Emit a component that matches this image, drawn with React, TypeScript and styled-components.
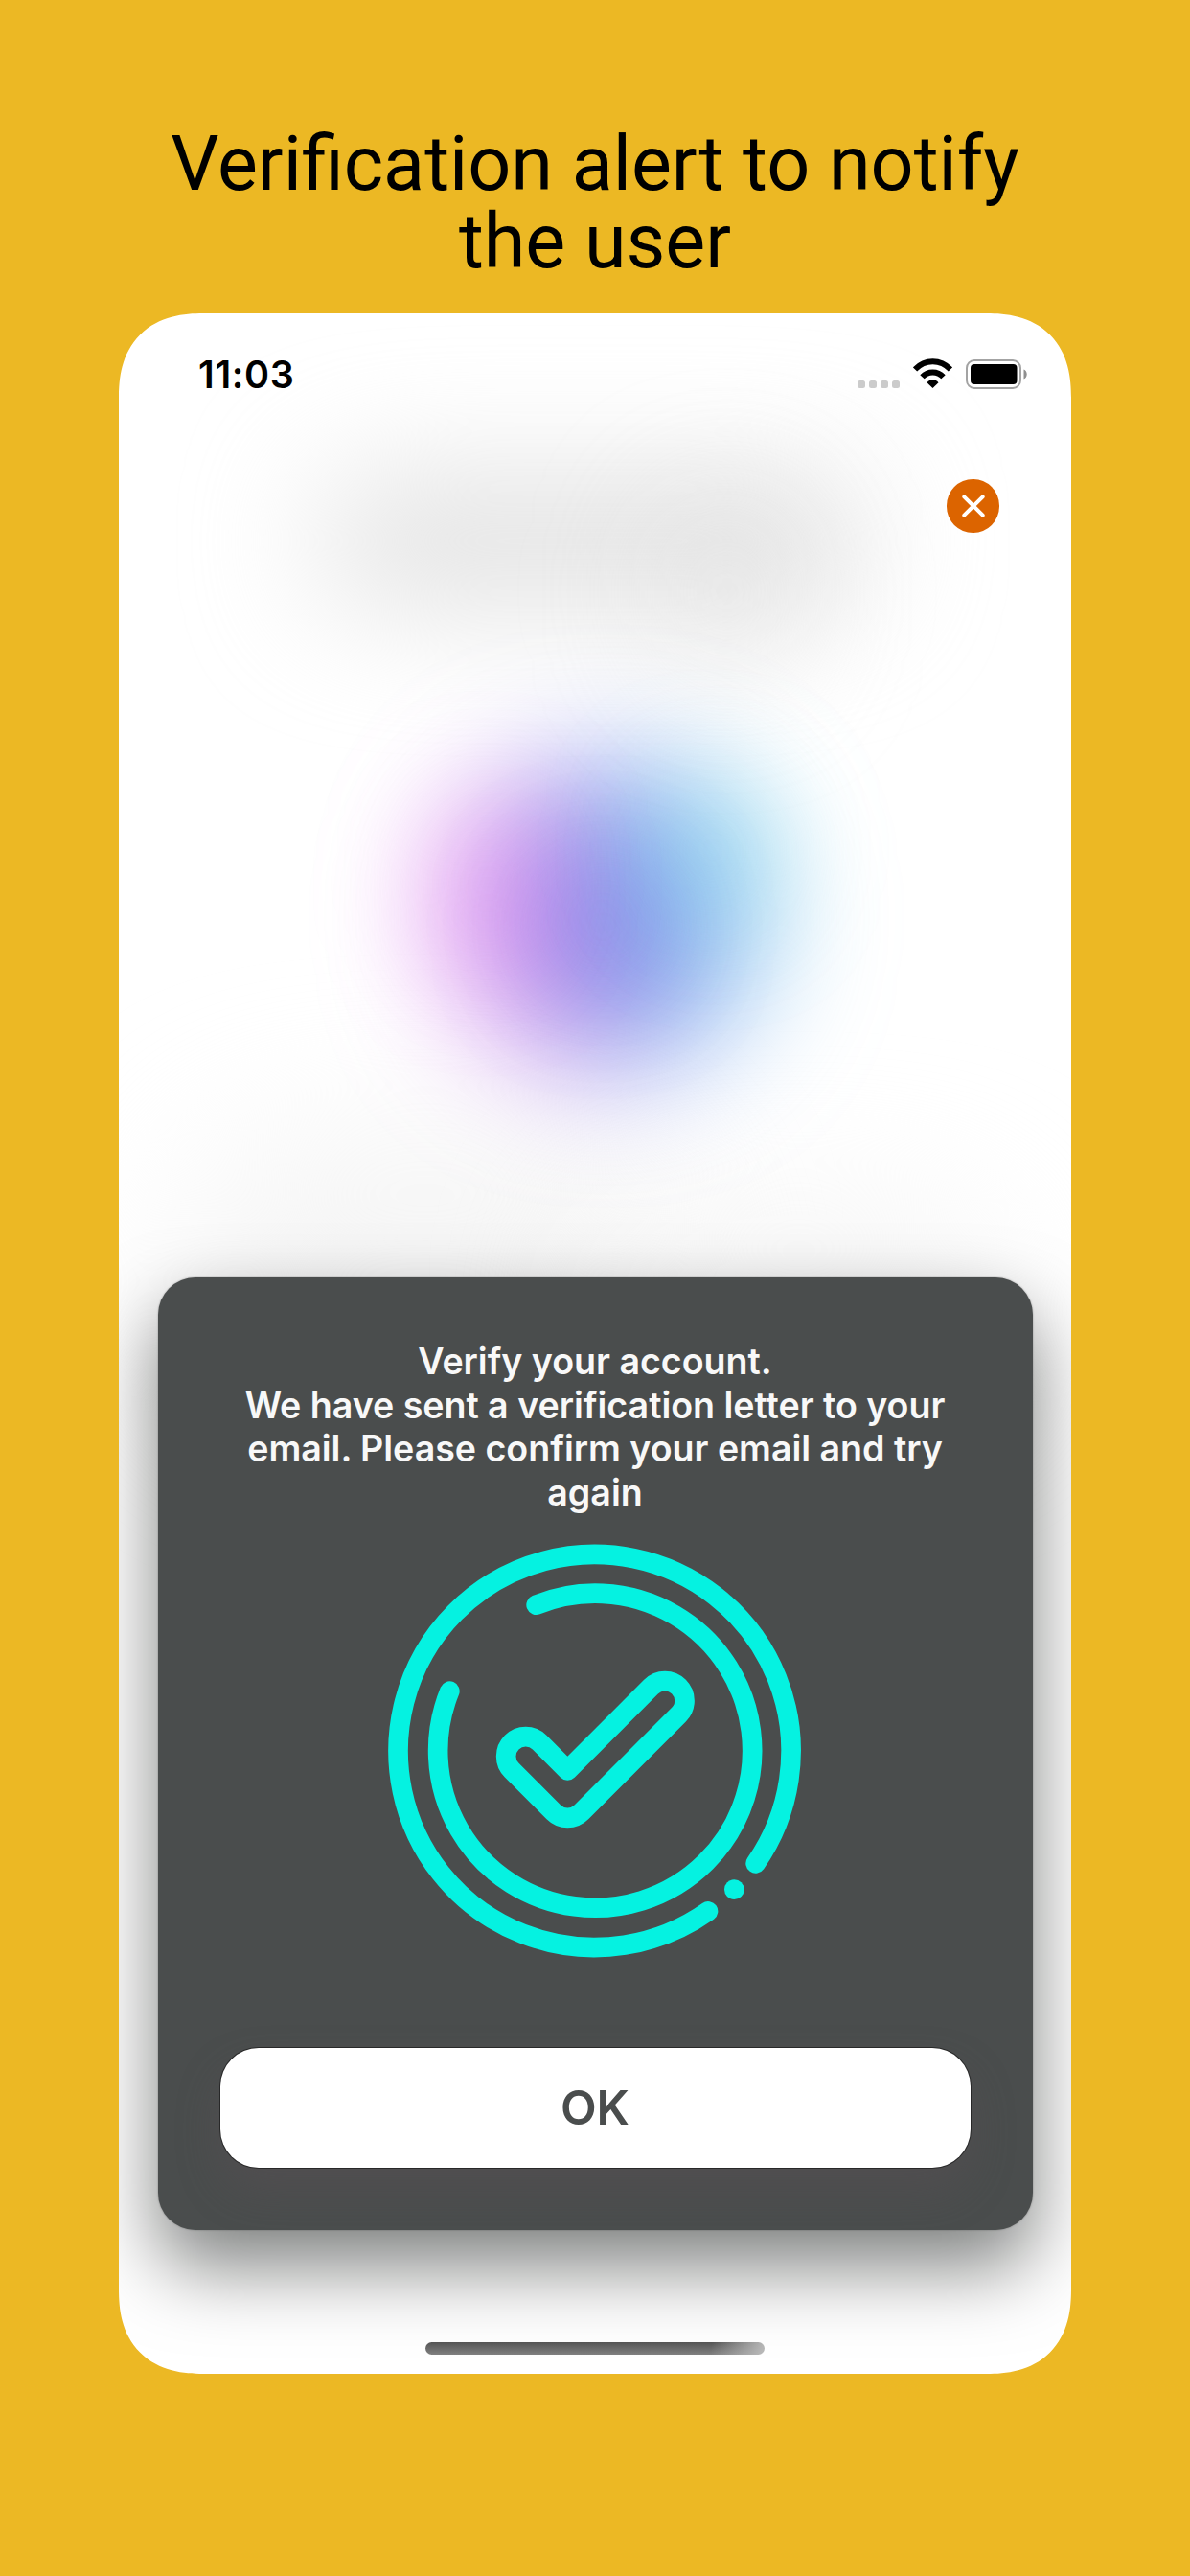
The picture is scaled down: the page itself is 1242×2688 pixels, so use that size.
import React from "react";
import styled, { createGlobalStyle } from "styled-components";

const GlobalStyle = createGlobalStyle`
  *, *::before, *::after { box-sizing: border-box; }
  body { margin: 0; background: #ecb824; }
`;

const Page = styled.main`
  display: flex;
  flex-direction: column;
  align-items: center;
  width: 1242px;
  height: 2688px;
  padding-top: 131px;
  overflow: hidden;
  background: #ecb824;
`;

const Title = styled.h1`
  width: 920px;
  height: 196px;
  margin: 0;
  color: #000;
  font: 400 79.1px/81px Roboto, sans-serif;
  text-align: center;
`;

const Screen = styled.section`
  position: relative;
  isolation: isolate;
  display: flex;
  flex-direction: column;
  width: 993.6px;
  height: 2150px;
  overflow: hidden;
  border-radius: 88px;
  corner-shape: superellipse(1.25);
  background: #fff;
  font-family: Inter, sans-serif;
`;

const Backdrop = styled.div`
  position: absolute;
  inset: 0;
  z-index: -1;
`;

const Blob = styled.div<{ $x: number; $y: number; $w: number; $h: number; $fill: string; $blur: number }>`
  position: absolute;
  left: ${(p) => p.$x}px;
  top: ${(p) => p.$y}px;
  width: ${(p) => p.$w}px;
  height: ${(p) => p.$h}px;
  border-radius: ${(p) => Math.min(p.$w, p.$h) / 2}px;
  background: ${(p) => p.$fill};
  filter: blur(${(p) => p.$blur}px);
`;

const StatusBar = styled.header`
  display: flex;
  justify-content: space-between;
  align-items: flex-end;
  height: 78px;
  padding: 0 46.3px 0 82.8px;
`;

const Time = styled.time`
  margin-bottom: -10px;
  color: #000;
  font-size: 39.5px;
  font-weight: 600;
  line-height: 48px;
  letter-spacing: 0.7px;
`;

const Indicators = styled.div`
  display: flex;
  align-items: flex-end;
`;

const Dots = styled.div`
  display: flex;
  gap: 4px;
  margin-right: 14px;
`;

const Dot = styled.i`
  width: 8px;
  height: 8px;
  border-radius: 2.5px;
  background: #cbcbcb;
`;

const Wifi = styled.svg`
  display: block;
  width: 41px;
  height: 31px;
  margin-right: 14px;
`;

const Battery = styled.svg`
  display: block;
  width: 64px;
  height: 31px;
  margin-bottom: -0.5px;
`;

const Toolbar = styled.div`
  display: flex;
  justify-content: flex-end;
  padding: 95px 74.5px 0 0;
`;

const CloseButton = styled.button`
  display: flex;
  align-items: center;
  justify-content: center;
  width: 55.5px;
  height: 55.5px;
  padding: 0;
  border: 0;
  border-radius: 50%;
  background: #dc6400;
`;

const Dialog = styled.section`
  display: flex;
  flex-direction: column;
  align-items: center;
  width: 913px;
  height: 994px;
  margin: auto 0 150px 40.3px;
  padding-top: 65px;
  border-radius: 39px;
  background: #4a4d4d;
  box-shadow: 0 38px 80px rgba(0, 5, 3, 0.5), 0 0 2px rgba(0, 0, 0, 0.35);
`;

const Message = styled.p`
  margin: 0;
  width: 780px;
  color: #f8f8f8;
  font-size: 37.6px;
  font-weight: 600;
  line-height: 45.5px;
  letter-spacing: -0.02px;
  text-align: center;
`;

const Emblem = styled.svg`
  display: block;
  width: 431px;
  height: 431px;
  margin-top: 31px;
  overflow: visible;
`;

const OkButton = styled.button`
  width: 783px;
  height: 125.5px;
  margin-top: 94.5px;
  padding: 0;
  border: 0;
  border-radius: 40px;
  background: #fff;
  box-shadow: 0 0 0 1px rgba(20, 20, 20, 0.65), 0 24px 44px rgba(90, 80, 85, 0.4);
  color: #4a4d4d;
  font: 600 49px/126px Inter, sans-serif;
`;

const HomeIndicator = styled.div`
  position: absolute;
  left: 320px;
  bottom: 20px;
  width: 354px;
  height: 13px;
  border-radius: 6.5px;
  background:
    linear-gradient(100deg, transparent 84%, rgba(190, 190, 190, 0.9) 99%),
    linear-gradient(180deg, #545454, #808080);
`;

const signal = [0, 1, 2, 3];

export default function App() {
  return (
    <>
      <GlobalStyle />
      <Page>
        <Title>
          Verification alert to notify
          <br />
          the user
        </Title>
        <Screen>
          <Backdrop>
            <Blob $x={210} $y={175} $w={570} $h={125} $fill="#dfdfdf" $blur={68} />
            <Blob $x={560} $y={190} $w={150} $h={200} $fill="rgba(220,222,221,.35)" $blur={66} />
            <Blob $x={60} $y={860} $w={520} $h={300} $fill="#f5f5f5" $blur={80} />
            <Blob $x={500} $y={940} $w={420} $h={200} $fill="#f5f5f5" $blur={80} />
            <Blob
              $x={342}
              $y={468}
              $w={335}
              $h={322}
              $fill="linear-gradient(80deg, rgba(235,110,240,.7) 0%, rgba(180,105,228,.72) 30%, rgba(95,120,230,.72) 52%, rgba(95,170,235,.7) 74%, rgba(120,205,235,.65) 100%)"
              $blur={64}
            />
            <Blob $x={430} $y={570} $w={150} $h={140} $fill="rgba(110,105,225,.3)" $blur={54} />
            <Blob $x={550} $y={480} $w={140} $h={160} $fill="rgba(105,215,230,.32)" $blur={54} />
            <Blob $x={320} $y={500} $w={130} $h={190} $fill="rgba(235,125,242,.27)" $blur={54} />
          </Backdrop>
          <StatusBar>
            <Time>11:03</Time>
            <Indicators>
              <Dots>
                {signal.map((n) => (
                  <Dot key={n} />
                ))}
              </Dots>
              <Wifi viewBox="0 0 41 31" fill="none" stroke="#000" strokeWidth="6">
                <path d="M2 11.5C12.5 0.6 28.5 0.6 39 11.5" />
                <path d="M9.5 19.3C15.5 12.9 25.5 12.9 31.5 19.3" />
                <path d="M14.5 25.2C17.8 21.4 23.2 21.4 26.5 25.2L20.5 31Z" fill="#000" stroke="none" />
              </Wifi>
              <Battery viewBox="0 0 64 31">
                <rect x="1" y="1" width="56" height="29" rx="8" fill="none" stroke="#a3a3a3" strokeWidth="2" />
                <rect x="5" y="5" width="48.5" height="21" rx="4" fill="#000" />
                <path d="M60.5 10.5C64.8 12 64.8 19 60.5 20.5Z" fill="#8f8f8f" />
              </Battery>
            </Indicators>
          </StatusBar>
          <Toolbar>
            <CloseButton aria-label="Close">
              <svg width="28" height="28" viewBox="0 0 28 28" stroke="#fff" strokeWidth="4" strokeLinecap="round">
                <path d="M4.3 4.3L23.7 23.7M23.7 4.3L4.3 23.7" />
              </svg>
            </CloseButton>
          </Toolbar>
          <Dialog role="alertdialog">
            <Message>
              Verify your account.
              <br />
              We have sent a verification letter to your
              <br />
              email. Please confirm your email and try
              <br />
              again
            </Message>
            <Emblem viewBox="0 0 1293 1293" fill="none" stroke="#05f2e1" strokeWidth="62" strokeLinecap="round" strokeLinejoin="round">
              <path d="M1148 1000A615 615 0 1 0 999 1150" />
              <path d="M461 191A492 492 0 1 1 190 461" />
              <path d="M559 709L820.5 447.5A61.5 61.5 0 0 1 907.5 534.5L602.5 839.5A61.5 61.5 0 0 1 515.5 839.5L384.5 708.5A61.5 61.5 0 0 1 471.5 621.5Z" />
              <circle cx="1081" cy="1082" r="31" fill="#05f2e1" stroke="none" />
            </Emblem>
            <OkButton>OK</OkButton>
          </Dialog>
          <HomeIndicator />
        </Screen>
      </Page>
    </>
  );
}
